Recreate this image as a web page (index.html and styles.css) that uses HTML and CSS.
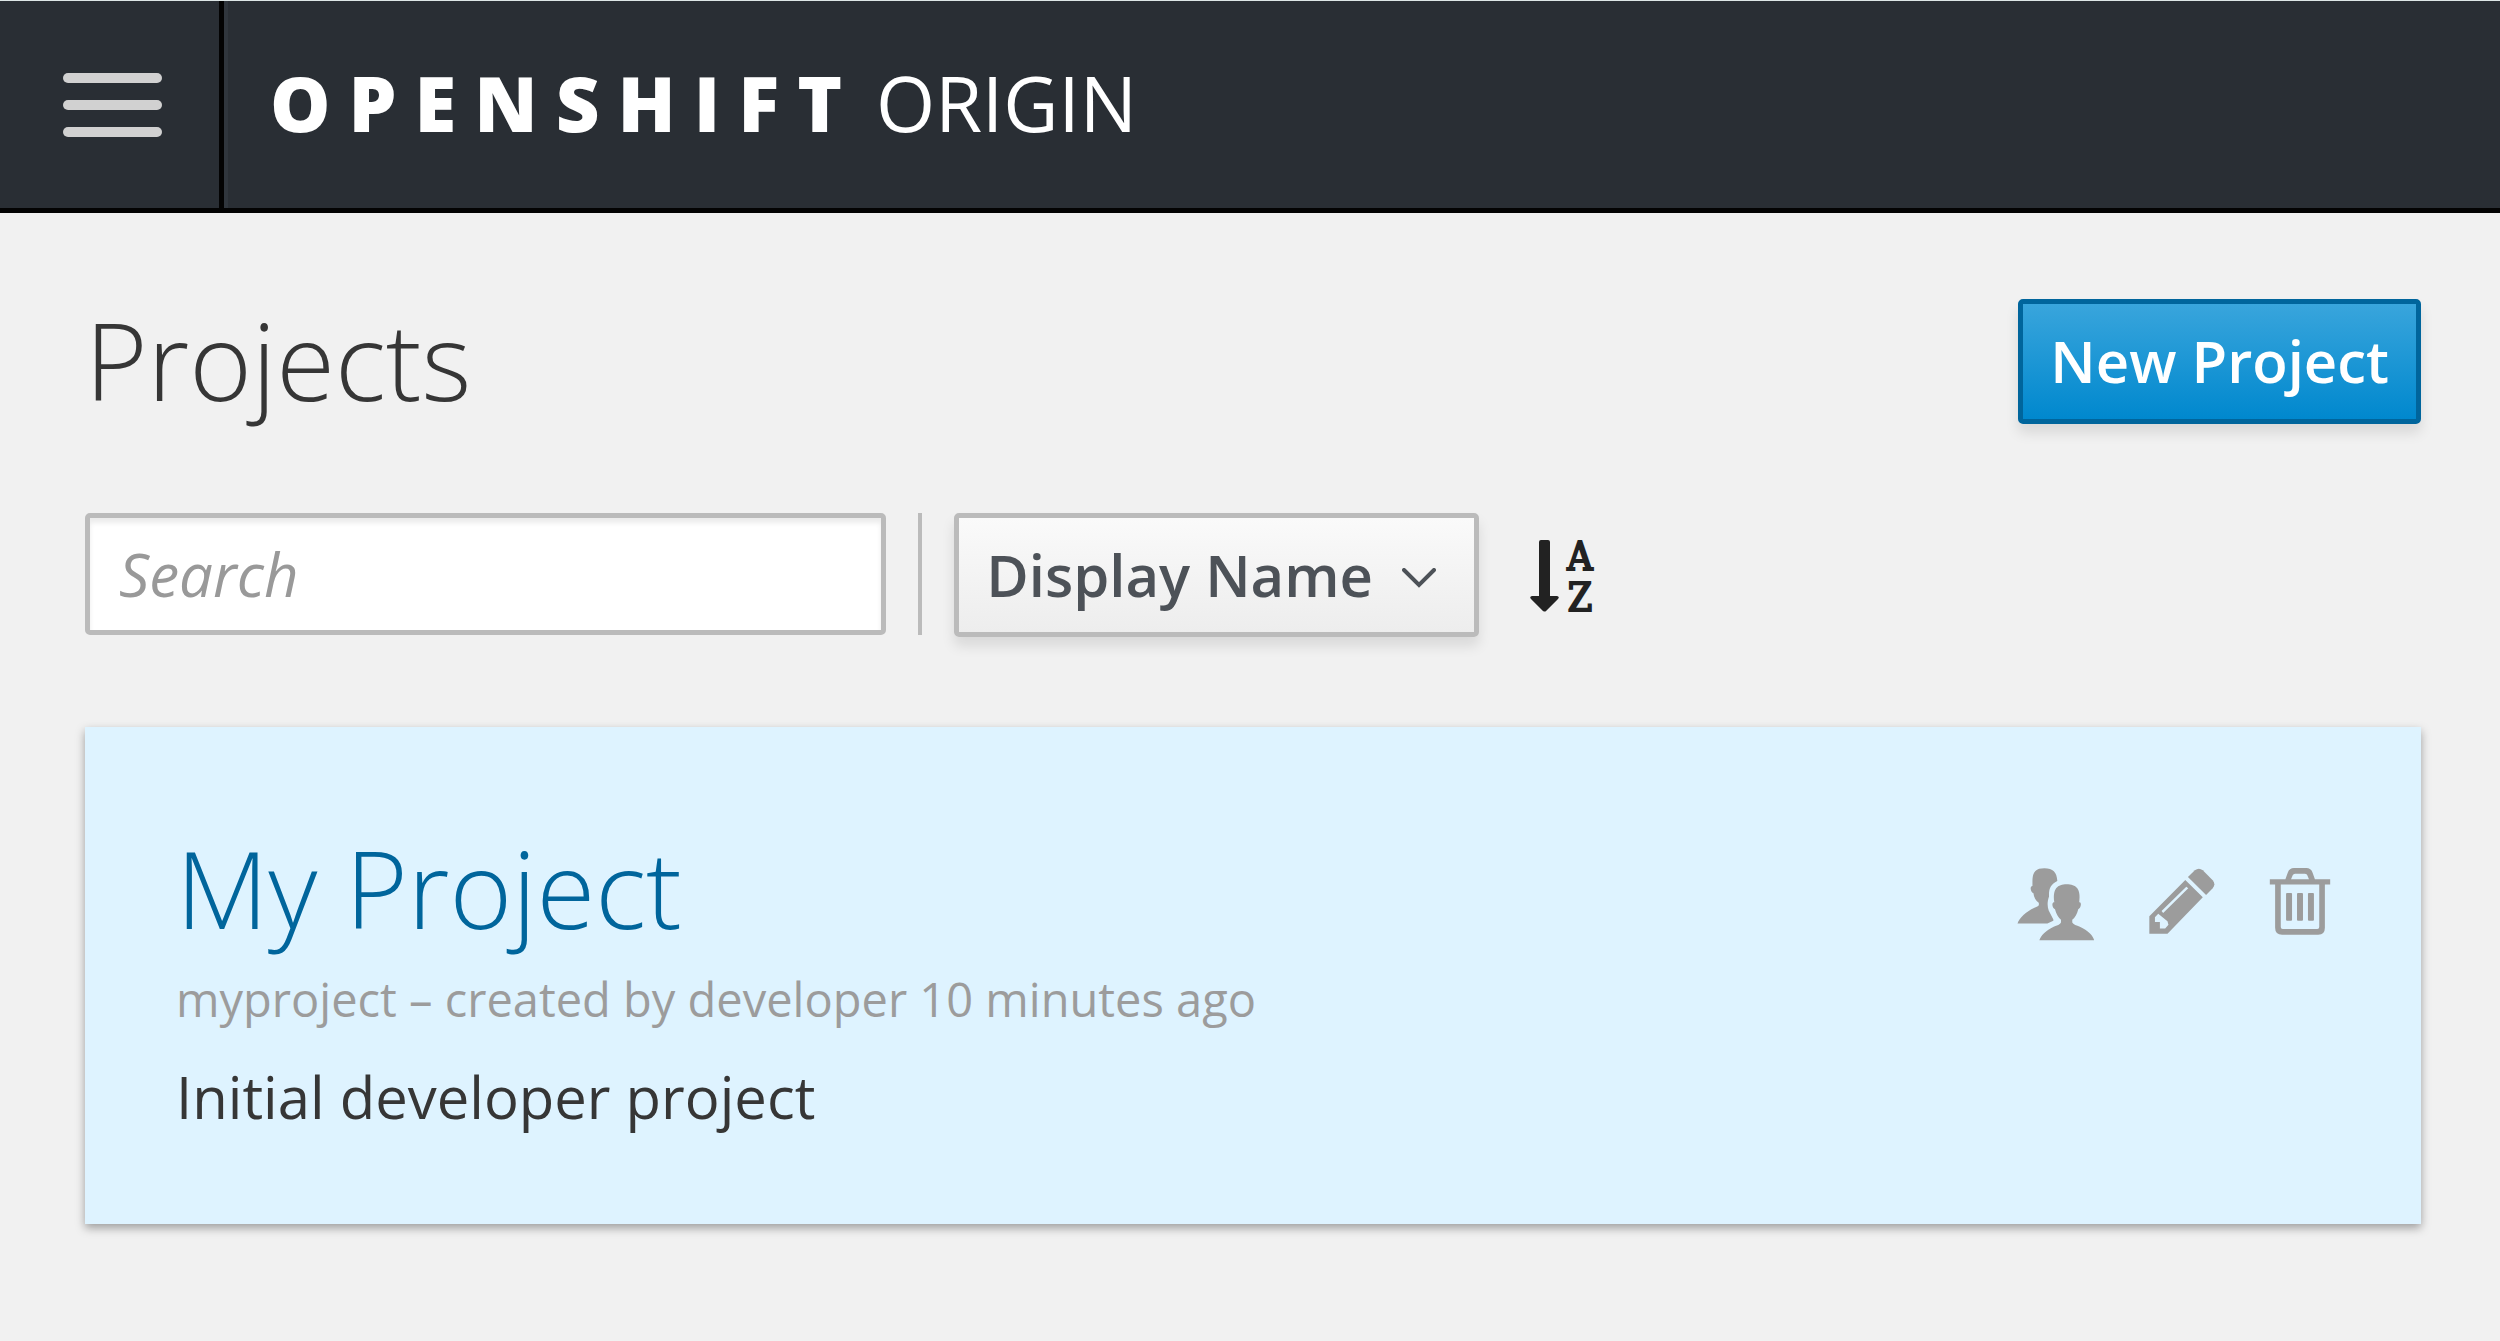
FILE: index.html
```html
<!DOCTYPE html>
<html lang="en">
<head>
<meta charset="utf-8">
<title>OpenShift Origin</title>
<meta name="viewport" content="width=device-width, initial-scale=1">
<link rel="stylesheet" href="styles.css">
</head>
<body>
<header class="navbar">
  <button class="navbar-toggle" type="button" aria-label="Toggle navigation">
    <span class="bar"></span>
    <span class="bar"></span>
    <span class="bar"></span>
  </button>
  <a class="brand" href="#"><span class="brand-name">OPENSHIFT</span><span class="brand-edition">ORIGIN</span></a>
</header>
<main class="page">
  <div class="page-header">
    <h1 class="heading">Projects</h1>
    <button class="btn-primary" type="button">New Project</button>
  </div>
  <form class="toolbar">
    <input class="search" type="text" placeholder="Search" aria-label="Search">
    <div class="sort">
      <div class="select-wrap">
        <select class="select" aria-label="Sort by">
          <option>Display Name</option>
        </select>
        <svg class="chevron" viewBox="0 0 34 20" aria-hidden="true"><path d="M2 2L17 17L32 2"/></svg>
      </div>
      <button class="sort-button" type="button" aria-label="Sort ascending">
        <svg class="sort-icon" viewBox="0 0 68 74" aria-hidden="true">
          <path d="M11 1H18Q20 1 20 3V57H27Q30 58 28 60L16 72Q15 73 13 72L1 60Q-1 58 2 57H9V3Q9 1 11 1Z"/>
          <text x="50" y="31" text-anchor="middle">A</text>
          <text x="50" y="72" text-anchor="middle">Z</text>
        </svg>
      </button>
    </div>
  </form>
  <section class="card">
    <div class="card-body">
      <h2 class="heading"><a class="card-link" href="#">My Project</a></h2>
      <p class="meta">myproject – created by developer 10 minutes ago</p>
      <p class="description">Initial developer project</p>
    </div>
    <div class="actions">
      <a class="action" href="#" aria-label="Edit membership">
        <svg class="icon-users" viewBox="0 0 234 220" aria-hidden="true">
          <path d="M46 40C46 10 58 1 82 1C108 1 119 12 121 39C101 50 95 60 96 86C90 103 91 117 95 128L109 155V159L91 167H1C6 148 37 124 59 117C66 114 66 110 65 105C56 99 50 87 49 76C39 71 38 54 46 54Z"/>
          <path d="M112 103C106 62 122 49 149 49C177 49 193 62 187 103C195 101 193 120 184 124C181 138 174 150 166 156V164C169 170 179 173 189 177C213 188 230 205 232 218H67C70 205 87 188 110 177C120 173 130 170 132 164V156C125 150 117 138 114 124C105 120 103 101 112 103Z"/>
        </svg>
      </a>
      <a class="action" href="#" aria-label="Edit project">
        <svg class="icon-pencil" viewBox="0 0 200 200" aria-hidden="true">
          <path fill-rule="evenodd" d="M1 146L110 36L163 89L56 199H1ZM28 139L18 149V164H33V183H49L59 172L56 161ZM38 130L43 136L119 61L113 57Z"/>
          <path d="M118 27L139 7Q151-3 163 7L193 37Q203 49 193 61L173 82Z"/>
        </svg>
      </a>
      <a class="action" href="#" aria-label="Delete project">
        <svg class="icon-trash" viewBox="0 0 186 202" aria-hidden="true">
          <path fill-rule="evenodd" d="M2 34H49L56 14Q61 0 75 0H112Q126 0 131 14L138 34H184V50H168V180Q168 201 148 201H39Q18 201 18 180V50H2ZM66 34H120L115 22Q114 17 108 17H78Q73 17 71 22ZM35 50V178Q35 184 41 184H145Q151 184 151 178V50Z"/>
          <rect x="51" y="75" width="18" height="84" rx="3"/>
          <rect x="84" y="75" width="18" height="84" rx="3"/>
          <rect x="117" y="75" width="18" height="84" rx="3"/>
        </svg>
      </a>
    </div>
  </section>
</main>
</body>
</html>
```

FILE: styles.css
```css
* { box-sizing: border-box; }

body {
  margin: 0;
  background: #f1f1f1;
  color: #363636;
  font-family: "Open Sans", "Noto Sans", sans-serif;
  font-size: 58px;
}

button, input, select { font: inherit; margin: 0; }

.navbar {
  display: flex;
  height: 213px;
  background: #292e34;
  border-top: 1px solid #dde6e6;
  border-bottom: 5px solid #030303;
}

.navbar-toggle {
  display: flex;
  flex-direction: column;
  justify-content: center;
  gap: 17px;
  width: 224px;
  padding: 0 57px 0 63px;
  border: 0;
  border-right: 5px solid #030303;
  background: none;
}

.bar {
  height: 10px;
  border-radius: 5px;
  background: #d1d1d1;
}

.brand {
  display: flex;
  align-items: center;
  gap: 16px;
  flex: 1;
  padding: 0 0 4px 42px;
  border-left: 4px solid #30363d;
  color: #fff;
  font-size: 76px;
  line-height: 104px;
  text-decoration: none;
}

.brand-name { font-weight: 800; letter-spacing: 18px; }
.brand-edition { font-weight: 400; }

.page { padding: 86px 79px 60px 85px; }

.page-header {
  display: flex;
  justify-content: space-between;
  align-items: flex-start;
}

.heading {
  margin: 0;
  font-size: 107px;
  font-weight: 300;
  line-height: 122px;
}

.btn-primary {
  height: 125px;
  padding: 0 27px 2px;
  border: 5px solid #00659c;
  border-radius: 5px;
  background: linear-gradient(#39a5dc, #0088ce);
  box-shadow: 0 9px 13px rgba(3, 3, 3, 0.1);
  color: #fff;
  font-weight: 600;
}

.toolbar {
  display: flex;
  align-items: flex-start;
  gap: 32px;
  margin: 89px 0 90px;
}

.search {
  width: 34.3%;
  height: 122px;
  padding: 0 29px;
  border: 5px solid #bbb;
  border-radius: 5px;
  background: #fff;
  box-shadow: inset 0 5px 5px rgba(3, 3, 3, 0.08);
  color: #363636;
}

.search::placeholder {
  color: #999;
  font-size: 60px;
  font-style: italic;
  opacity: 1;
}

.sort { display: flex; position: relative; padding-left: 36px; }

.sort::before {
  content: "";
  position: absolute;
  left: 0;
  top: 0;
  width: 4px;
  height: 122px;
  background: #bbb;
}

.select-wrap { position: relative; }

.select {
  appearance: none;
  height: 124px;
  padding: 0 101px 2px 27px;
  border: 5px solid #bbb;
  border-radius: 5px;
  background: linear-gradient(#fafafa, #ededed);
  box-shadow: 0 9px 13px rgba(3, 3, 3, 0.1);
  color: #4d5258;
  font-weight: 600;
}

.chevron {
  position: absolute;
  right: 43px;
  top: 55px;
  width: 34px;
  height: 20px;
  fill: none;
  stroke: #4d5258;
  stroke-width: 4;
  stroke-linecap: round;
  pointer-events: none;
}

.sort-button {
  display: flex;
  align-items: center;
  padding: 2px 51px 0;
  border: 0;
  background: none;
}

.sort-icon {
  width: 68px;
  height: 74px;
  overflow: visible;
  fill: #222;
  font-family: "DejaVu Serif Condensed", "DejaVu Serif", serif;
  font-size: 39px;
}

.sort-icon text { stroke: #222; stroke-width: 2; }

.card {
  display: flex;
  justify-content: space-between;
  padding: 100px 90px 87px 91px;
  background: #def3ff;
  box-shadow: 0 4px 9px rgba(3, 3, 3, 0.35);
}

.card-link { color: #00659c; text-decoration: none; }

.meta {
  margin: 15px 0 23px;
  color: #9c9c9c;
  font-size: 47px;
  line-height: 70px;
}

.description { margin: 0; line-height: 80px; }

.actions {
  display: flex;
  align-items: flex-start;
  gap: 54px;
  padding-top: 41px;
}

.action { display: flex; fill: #9c9c9c; }

.icon-users { width: 78px; height: 73px; }
.icon-pencil { width: 66px; height: 66px; }
.icon-trash { width: 62px; height: 67px; }
```
